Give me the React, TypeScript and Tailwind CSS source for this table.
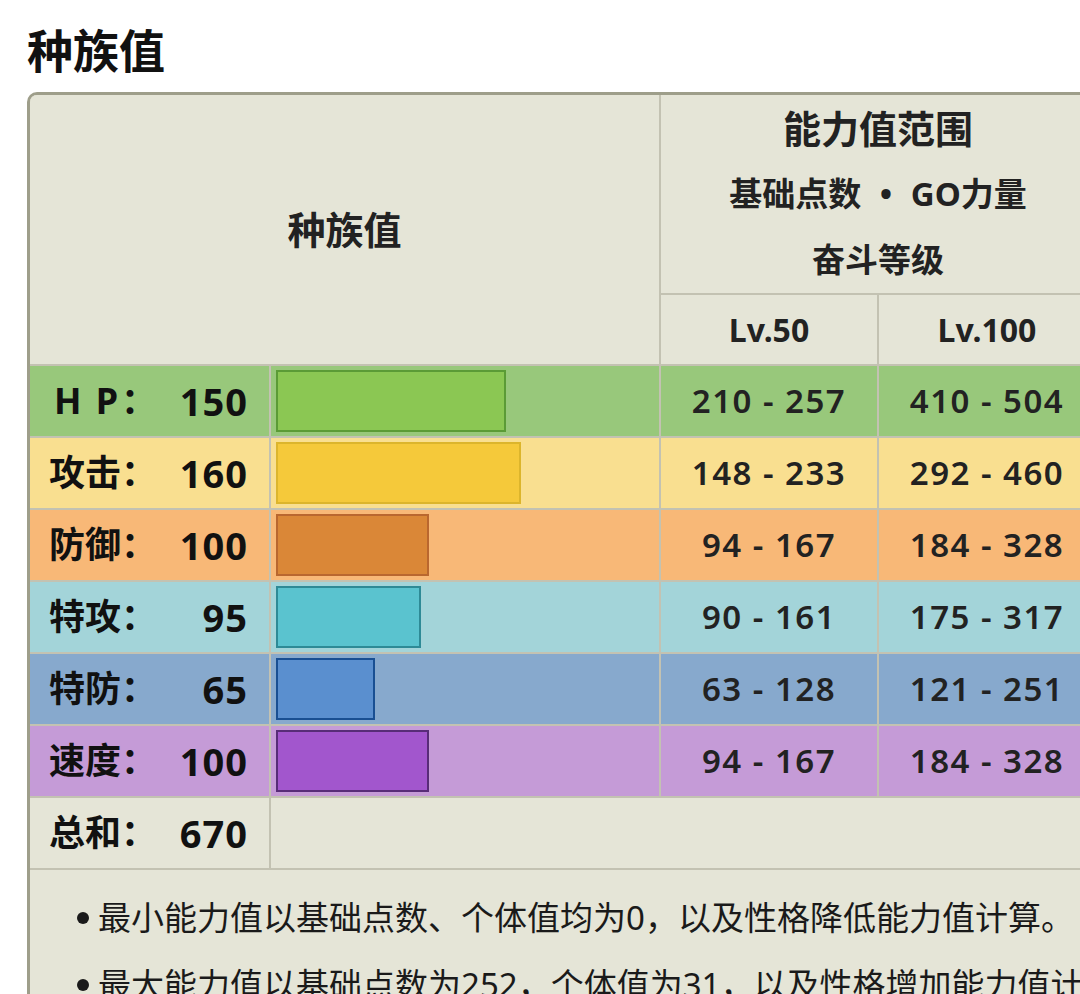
import React from 'react';

type StatRow = {
  label: string;
  value: number;
  lv50: string;
  lv100: string;
  rowBg: string;
  barCls: string;
};

const rows: StatRow[] = [
  { label: 'HP', value: 150, lv50: '210 - 257', lv100: '410 - 504', rowBg: 'bg-[#98c87b]', barCls: 'bg-[#8bc753] border-[#5b9b36]' },
  { label: '攻击', value: 160, lv50: '148 - 233', lv100: '292 - 460', rowBg: 'bg-[#f9df90]', barCls: 'bg-[#f5c93a] border-[#dcb52c]' },
  { label: '防御', value: 100, lv50: '94 - 167', lv100: '184 - 328', rowBg: 'bg-[#f8b877]', barCls: 'bg-[#da8737] border-[#b9672f]' },
  { label: '特攻', value: 95, lv50: '90 - 161', lv100: '175 - 317', rowBg: 'bg-[#a3d4d9]', barCls: 'bg-[#5ac3cf] border-[#2e8a96]' },
  { label: '特防', value: 65, lv50: '63 - 128', lv100: '121 - 251', rowBg: 'bg-[#87a9cd]', barCls: 'bg-[#5a8fcf] border-[#194f92]' },
  { label: '速度', value: 100, lv50: '94 - 167', lv100: '184 - 328', rowBg: 'bg-[#c59bd7]', barCls: 'bg-[#a256cd] border-[#582c78]' },
];

const font = 'font-["Noto_Sans","Noto_Sans_CJK_SC",sans-serif]';

function Label({ text }: { text: string }) {
  if (text === 'HP') {
    return (
      <span className="inline-flex w-[72px] justify-between pl-[5px] pr-[3px]">
        <span>H</span>
        <span>P</span>
      </span>
    );
  }
  return <span>{text}</span>;
}

export default function App() {
  return (
    <div className={`w-[1080px] h-[994px] overflow-hidden bg-white text-[#222] ${font}`}>
      <h1 className="pl-[27px] mt-[27px] mb-[19px] text-[46px] leading-[46px] font-bold text-[#111]">种族值</h1>

      <div className="ml-[27px] w-[1071px] border-l-[3px] border-t-[3px] border-[#9e9e8a] rounded-tl-[10px] overflow-hidden">
        <div className="grid grid-cols-[239px_388px_216px_216px] gap-[2px] bg-[#c3c2b2]">
          {/* header */}
          <div className="col-span-2 row-span-2 bg-[#e5e5d7] flex items-center justify-center text-[38px] font-bold">
            种族值
          </div>
          <div className="col-span-2 h-[198px] bg-[#e5e5d7] flex flex-col items-center font-bold">
            <div className="leading-[66px] text-[38px]">能力值范围</div>
            <div className="leading-[66px] text-[33px]">基础点数 <span className="mx-[10px]">•</span> GO力量</div>
            <div className="leading-[66px] text-[33px]">奋斗等级</div>
          </div>
          <div className="h-[69px] bg-[#e5e5d7] flex items-center justify-center text-[32px] font-bold">Lv.50</div>
          <div className="h-[69px] bg-[#e5e5d7] flex items-center justify-center text-[32px] font-bold">Lv.100</div>

          {/* stat rows */}
          {rows.map(r => (
            <React.Fragment key={r.label}>
              <div className={`${r.rowBg} h-[70px] flex items-center justify-between pl-[19px] pr-[21px] font-bold text-[#111]`}>
                <span className="text-[36px]">
                  <Label text={r.label} />：
                </span>
                <span className="text-[38px] tracking-[1px]">{r.value}</span>
              </div>
              <div className={`${r.rowBg} h-[70px] flex items-center px-[5px]`}>
                <div className={`h-[62px] border-2 ${r.barCls}`} style={{ width: Math.round(r.value * 1.53) }} />
              </div>
              <div className={`${r.rowBg} h-[70px] flex items-center justify-center text-[33px] font-semibold tracking-[1.5px]`}>{r.lv50}</div>
              <div className={`${r.rowBg} h-[70px] flex items-center justify-center text-[33px] font-semibold tracking-[1.5px]`}>{r.lv100}</div>
            </React.Fragment>
          ))}

          {/* total */}
          <div className="bg-[#e5e5d7] h-[70px] flex items-center justify-between pl-[19px] pr-[21px] font-bold text-[#111]">
            <span className="text-[36px]">总和：</span>
            <span className="text-[38px] tracking-[1px]">670</span>
          </div>
          <div className="col-span-3 bg-[#e5e5d7] h-[70px]" />

          {/* notes */}
          <div className="col-span-4 bg-[#e5e5d7] pt-[14px] pb-[20px] pl-[47px] text-[33px] text-[#1a1a1a]">
            <div className="flex items-center h-[67px] whitespace-nowrap">
              <span className="w-[12px] h-[12px] rounded-full bg-[#1a1a1a] mr-[9px] shrink-0" />
              最小能力值以基础点数、个体值均为0，以及性格降低能力值计算。
            </div>
            <div className="flex items-center h-[67px] whitespace-nowrap">
              <span className="w-[12px] h-[12px] rounded-full bg-[#1a1a1a] mr-[9px] shrink-0" />
              最大能力值以基础点数为252，个体值为31，以及性格增加能力值计算。
            </div>
          </div>
        </div>
      </div>
    </div>
  );
}
